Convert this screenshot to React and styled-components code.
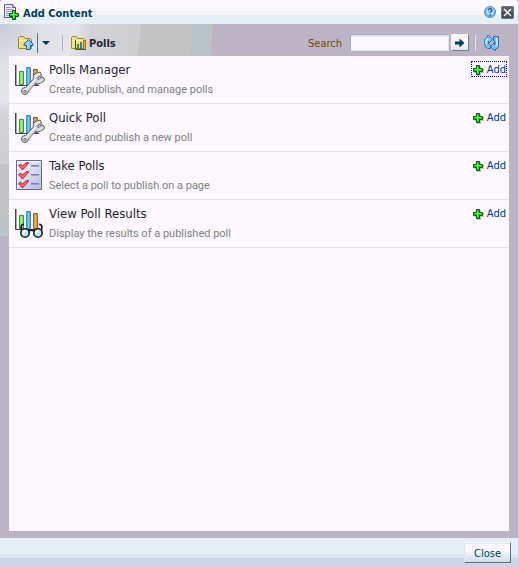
import React, { useState } from "react";
import styled, { createGlobalStyle } from "styled-components";

const GlobalStyle = createGlobalStyle`
  * {
    box-sizing: border-box;
  }
  body {
    margin: 0;
    font-family: "DejaVu Sans Condensed", "DejaVu Sans", sans-serif;
    font-size: 11px;
    background: #bcb3c5;
  }
`;

const Dialog = styled.div`
  display: flex;
  flex-direction: column;
  min-height: 100vh;
  border-right: 1px solid #c3d3e6;
`;

const TitleBar = styled.header`
  display: flex;
  align-items: center;
  height: 24px;
  padding: 0 4px 0 3px;
  border-top-left-radius: 3px;
  border-top-right-radius: 3px;
  background: linear-gradient(
    #fdf7ff 8px,
    #f7f7f9 8px,
    #f7f7f9 15px,
    #e6eef6 15px
  );
`;

const Title = styled.h1`
  flex: 1;
  margin: 0 0 0 4px;
  padding-top: 3px;
  font-size: 11px;
  line-height: 16px;
  font-weight: bold;
  color: #003d5b;
`;

const IconButton = styled.button`
  display: flex;
  padding: 0;
  border: 0;
  background: none;
  cursor: pointer;
`;

const TitleActions = styled.div`
  display: flex;
  align-items: center;
  gap: 5px;
`;

const Body = styled.main`
  display: flex;
  flex: 1;
  flex-direction: column;
  padding: 0 9px 7px;
  background: radial-gradient(
    circle at 0 0,
    #c9cad4 0,
    #e0e0e8 40px,
    #e4e4ea 75px,
    #d2d2d8 92px,
    #cfcfd2 140px,
    #c4c4c4 141px,
    #c4c4c4 192px,
    #b9c3c5 193px,
    #b9c3c5 212px,
    #bcb3c5 213px
  );
`;

const Toolbar = styled.div`
  display: flex;
  align-items: center;
  height: 32px;
  padding: 5px 9px 0;
`;

const Divider = styled.span`
  width: 2px;
  height: 16px;
  border-left: 1px solid #a9b1c6;
  border-right: 1px solid #e6e6f0;
  margin: 0 ${(props) => props.$after}px 0 ${(props) => props.$before}px;
`;

const MenuButton = styled(IconButton)`
  align-items: center;
  height: 20px;
  margin-left: 3px;
  padding: 0 6px 0 4px;
  border-left: 1px solid #5f6b7a;
`;

const Crumb = styled.span`
  flex: 1;
  margin-left: 2px;
  padding-top: 2px;
  font-weight: bold;
  color: #26262c;
`;

const SearchForm = styled.form`
  display: flex;
  align-items: center;
`;

const SearchLabel = styled.label`
  margin-right: 8px;
  padding-top: 2px;
  color: #704800;
`;

const SearchInput = styled.input`
  width: 99px;
  height: 17px;
  padding: 0 3px;
  border: 1px solid;
  border-color: #9babb5 #d9e1ea #d9e1ea #9babb5;
  background: linear-gradient(#dfe7f0 2px, #fdf7ff 2px);
  font: inherit;
  outline: none;
`;

const GoButton = styled(IconButton)`
  align-items: center;
  justify-content: center;
  width: 18px;
  height: 17px;
  margin-left: 2px;
  border: 1px solid;
  border-color: #fdf7ff #6c8088 #6c8088 #fdf7ff;
  background: linear-gradient(#fdf7ff 50%, #dde5ef);
`;

const Content = styled.ul`
  flex: 1;
  margin: 0;
  padding: 0;
  list-style: none;
  background: #fdf7ff;
`;

const Row = styled.li`
  display: flex;
  align-items: flex-start;
  height: 48px;
  padding: 5px 2px 0 6px;
  border-bottom: 1px solid #e3e1e8;
`;

const RowIcon = styled.span`
  display: flex;
  width: 30px;
  padding-top: 3px;
`;

const RowText = styled.div`
  flex: 1;
  min-width: 0;
  margin-left: 4px;
`;

const RowTitle = styled.h2`
  margin: 0;
  font-size: 13px;
  line-height: 18px;
  font-weight: normal;
  color: #26262c;
`;

const RowDescription = styled.p`
  margin: 3px 0 0;
  font-family: Roboto, sans-serif;
  font-size: 11px;
  line-height: 16px;
  color: #7b847c;
`;

const AddLink = styled.a`
  display: flex;
  align-items: center;
  gap: 3px;
  height: 16px;
  padding-top: 1px;
  border: 1px dotted ${(props) => (props.$focused ? "#0000c8" : "transparent")};
  line-height: 14px;
  color: #003286;
  text-decoration: none;
  outline: none;
`;

const Footer = styled.footer`
  display: flex;
  justify-content: flex-end;
  align-items: flex-start;
  height: 29px;
  padding: 4px 7px 0;
  background: linear-gradient(
    #e6eef6 16px,
    #dde6ef 16px,
    #dde6ef 20px,
    #cfd5e8 20px
  );
`;

const CloseButton = styled.button`
  width: 47px;
  height: 21px;
  padding: 3px 0 0;
  border: 1px solid;
  border-color: #f8f4fc #5b7376 #5b7376 #e3e3ec;
  background: linear-gradient(
    #e6e6ec 1px,
    #fdf7ff 1px,
    #fdf7ff 8px,
    #e6eef6 12px,
    #d3dcec
  );
  font: inherit;
  line-height: 16px;
  color: #003d5b;
  cursor: pointer;
`;

const PlusIcon = () => (
  <svg width="12" height="12" viewBox="0 0 12 12" aria-hidden="true">
    <path d="M5 2h4v3h3v4H9v3H5V9H2V5h3z" fill="#b8c1bb" />
    <path
      d="M4.5 1.5h3v3h3v3h-3v3h-3v-3h-3v-3h3z"
      fill="#18c818"
      stroke="#066006"
    />
    <path d="M5.5 9V5.5H2.5M5.5 2.5v3h4" stroke="#72ef5c" fill="none" />
  </svg>
);

const AddContentIcon = () => (
  <svg width="16" height="16" viewBox="0 0 16 16" aria-hidden="true">
    <path d="M1.5.5h8l3 3v10h-11z" fill="#f4f2ff" stroke="#545c9c" />
    <path d="M9.5.5v3h3" fill="#c9cdea" stroke="#545c9c" />
    <path d="M3 3.5h5M3 5.5h7M3 7.5h7M3 9.5h4M3 11.5h3" stroke="#8b92c5" />
    <path
      d="M9.5 6.5h3v3h3v3h-3v3h-3v-3h-3v-3h3z"
      fill="#18c818"
      stroke="#066006"
    />
    <path d="M10.5 14v-3.5h-3M10.5 7.5v3h4" stroke="#72ef5c" fill="none" />
  </svg>
);

const HelpIcon = () => (
  <svg width="12" height="12" viewBox="0 0 12 12" aria-hidden="true">
    <circle cx="6" cy="6" r="5.5" fill="#61aee6" stroke="#5b93c8" />
    <circle cx="6" cy="5.5" r="4" fill="#a9d9f6" />
    <path
      d="M4.3 4.5q0-1.8 1.8-1.8t1.8 1.5q0 1-1.8 1.9v1M6.1 8.3v1.5"
      fill="none"
      stroke="#1a4f90"
      strokeWidth="1.3"
    />
  </svg>
);

const CloseIcon = () => (
  <svg width="13" height="13" viewBox="0 0 13 13" aria-hidden="true">
    <rect x=".5" y=".5" width="12" height="12" rx="1" fill="#454b59" stroke="#6d7482" />
    <path d="M1 1h11v5H1z" fill="#5b6270" />
    <path d="M3 3l7 7M10 3l-7 7" stroke="#fff" strokeWidth="1.3" />
  </svg>
);

const FolderShape = () => (
  <>
    <path
      d="M.5 13.5v-11l1-1h4l1.5 2h5.5l1 1v9z"
      fill="#f0dc7c"
      stroke="#a38622"
    />
    <path d="M1.5 5.5h11" stroke="#fff6b8" />
    <path d="M2 12.5V3" stroke="#faeb9c" />
  </>
);

const FolderUpIcon = () => (
  <svg width="16" height="15" viewBox="0 0 16 15" aria-hidden="true">
    <FolderShape />
    <path
      d="M10.5 4.5L15 9v1.5h-2.5v4h-4v-4H6V9z"
      fill="#7fc4f6"
      stroke="#1e62ae"
    />
    <path d="M10 7v6" stroke="#d4efff" />
  </svg>
);

const FolderPollIcon = () => (
  <svg width="16" height="15" viewBox="0 0 16 15" aria-hidden="true">
    <FolderShape />
    <path d="M4.5 5v9.5H15" stroke="#4e4e40" fill="none" />
    <path d="M6 9h2v5H6z" fill="#27a627" />
    <path d="M9 7h2v7H9z" fill="#2f78c4" />
    <path d="M12 5h3v9h-3z" fill="#b76910" />
    <path d="M13 6h1v8h-1z" fill="#efac48" />
  </svg>
);

const GoArrowIcon = () => (
  <svg width="10" height="10" viewBox="0 0 10 10" aria-hidden="true">
    <path d="M0 3.5h4.5v-3L9.5 5l-5 4.5v-3H0z" fill="#003d5b" />
  </svg>
);

const RefreshIcon = () => (
  <svg width="16" height="16" viewBox="0 0 16 16" aria-hidden="true">
    <path
      d="M6.5 13.5h-3Q.5 12 .5 7.5T3.5 2V.5h1l4 4-4 4V6q-1 3 2 4.5z"
      fill="#7cc4f8"
      stroke="#2a6cb2"
    />
    <path
      d="M9.5 1.500h5v9q0 3-3 3.500v1.500h-1l-4-4 4-4v2.500q2-3-1-5z"
      fill="#7cc4f8"
      stroke="#2a6cb2"
    />
    <path d="M2 9q-.5-4 2-5.5M13 3v8" stroke="#c9ebff" strokeWidth="1.5" fill="none" />
  </svg>
);

const ChartBars = () => (
  <>
    <path d="M1.5 1v20M2 21.5h22" stroke="#a9aaa4" />
    <path d="M.5 1v20.5H24" stroke="#444740" fill="none" />
    <path d="M4.5 7.5h4v13h-4z" fill="#7fe56c" stroke="#2f9c2f" />
    <path d="M6.5 9v11" stroke="#a6f394" />
    <path d="M11.5 3.5h4v17h-4z" fill="#5bb0ec" stroke="#3f8bca" />
    <path d="M13.5 5v15" stroke="#7fcbfa" />
    <path d="M18.5 5.5h4v15h-4z" fill="#dc9440" stroke="#a3641f" />
    <path d="M20.5 7v13" stroke="#f2b465" />
  </>
);

const WRENCH =
  "M24 10.5Q19.5 11.500 20.500 16L10.500 27M20.500 16Q23.500 19.500 27 15.500";

const PollManagerIcon = () => (
  <svg width="30" height="32" viewBox="0 0 30 32" aria-hidden="true">
    <ChartBars />
    <g fill="none" strokeLinecap="round" strokeLinejoin="round">
      <path d={WRENCH} stroke="#5d6064" strokeWidth="5.5" />
      <circle cx="10" cy="27" r="3.5" fill="#d9dbde" stroke="#5d6064" />
      <path d={WRENCH} stroke="#d9dbde" strokeWidth="3.5" />
      <path d="M20.5 13.500q.5-2.500 3-3.500M19.500 16L10 26" stroke="#fff" />
      <path d="M21.5 18L13 27" stroke="#a2a6ab" />
      <circle cx="10" cy="27.5" r="1.2" fill="#fdf7ff" stroke="#6e7176" />
    </g>
  </svg>
);

const ResultsIcon = () => (
  <svg width="30" height="32" viewBox="0 0 30 32" aria-hidden="true">
    <ChartBars />
    <path
      d="M6.5 22q-1-3 0-4.5 1-1.500 2.500-1M26.500 22q1-3 0-4.500-1-1.500-2.500-1M14 23q2.500-2 5 0"
      fill="none"
      stroke="#1c1c22"
      strokeWidth="1.8"
    />
    {[10, 23].map((cx) => (
      <g key={cx}>
        <circle cx={cx} cy="25" r="4.2" fill="#bce8f5" stroke="#1c1c22" strokeWidth="1.6" />
        <path d={`M${cx - 2} 26q0-3 3-3`} stroke="#fff" fill="none" strokeWidth="1.5" />
      </g>
    ))}
  </svg>
);

const TakePollIcon = () => (
  <svg width="30" height="32" viewBox="0 0 30 32" aria-hidden="true">
    <defs>
      <linearGradient id="sheet" x2="1" y2="1">
        <stop offset="0" stopColor="#fdf9ff" />
        <stop offset="1" stopColor="#b4bbe0" />
      </linearGradient>
    </defs>
    <path d="M1.5.5h25v29h-25z" fill="url(#sheet)" stroke="#5f68a5" />
    <path d="M2.5 28.5v-27h23" stroke="#fff" fill="none" />
    {[2, 11, 20].map((y) => (
      <g key={y} transform={`translate(3 ${y})`}>
        <path
          d="M.5 3.5L2.500 2l2 2 4-3.500h2L10 2 4.500 8z"
          fill="#ee4650"
          stroke="#c22b3a"
        />
        <path d="M2 3.5L4.500 6l4-4" stroke="#ff9292" fill="none" />
        <path d="M13 3.5h8" stroke="#7981b8" />
        <path d="M13 4.5h8" stroke="#9ba1cc" />
      </g>
    ))}
  </svg>
);

const items = [
  {
    title: "Polls Manager",
    description: "Create, publish, and manage polls",
    Icon: PollManagerIcon,
  },
  {
    title: "Quick Poll",
    description: "Create and publish a new poll",
    Icon: PollManagerIcon,
  },
  {
    title: "Take Polls",
    description: "Select a poll to publish on a page",
    Icon: TakePollIcon,
  },
  {
    title: "View Poll Results",
    description: "Display the results of a published poll",
    Icon: ResultsIcon,
  },
];

const App = () => {
  const [query, setQuery] = useState("");
  const [focused, setFocused] = useState(0);

  return (
    <>
      <GlobalStyle />
      <Dialog role="dialog" aria-labelledby="dialog-title">
        <TitleBar>
          <AddContentIcon />
          <Title id="dialog-title">Add Content</Title>
          <TitleActions>
            <IconButton type="button" aria-label="Help">
              <HelpIcon />
            </IconButton>
            <IconButton type="button" aria-label="Close dialog">
              <CloseIcon />
            </IconButton>
          </TitleActions>
        </TitleBar>
        <Body>
          <Toolbar>
            <IconButton type="button" aria-label="Up one level">
              <FolderUpIcon />
            </IconButton>
            <MenuButton type="button" aria-label="Folder path">
              <svg width="8" height="4" viewBox="0 0 8 4" aria-hidden="true">
                <path d="M0 0h8L4 4z" fill="#003d5b" />
              </svg>
            </MenuButton>
            <Divider $before={6} $after={7} />
            <FolderPollIcon />
            <Crumb>Polls</Crumb>
            <SearchForm onSubmit={(e) => e.preventDefault()}>
              <SearchLabel htmlFor="search">Search</SearchLabel>
              <SearchInput
                id="search"
                value={query}
                onChange={(e) => setQuery(e.target.value)}
              />
              <GoButton type="submit" aria-label="Go">
                <GoArrowIcon />
              </GoButton>
            </SearchForm>
            <Divider $before={5} $after={8} />
            <IconButton type="button" aria-label="Refresh">
              <RefreshIcon />
            </IconButton>
          </Toolbar>
          <Content>
            {items.map(({ title, description, Icon }, index) => (
              <Row key={title}>
                <RowIcon>
                  <Icon />
                </RowIcon>
                <RowText>
                  <RowTitle>{title}</RowTitle>
                  <RowDescription>{description}</RowDescription>
                </RowText>
                <AddLink
                  href="#add"
                  $focused={index === focused}
                  onClick={() => setFocused(index)}
                >
                  <PlusIcon />
                  Add
                </AddLink>
              </Row>
            ))}
          </Content>
        </Body>
        <Footer>
          <CloseButton type="button">Close</CloseButton>
        </Footer>
      </Dialog>
    </>
  );
};

export default App;
